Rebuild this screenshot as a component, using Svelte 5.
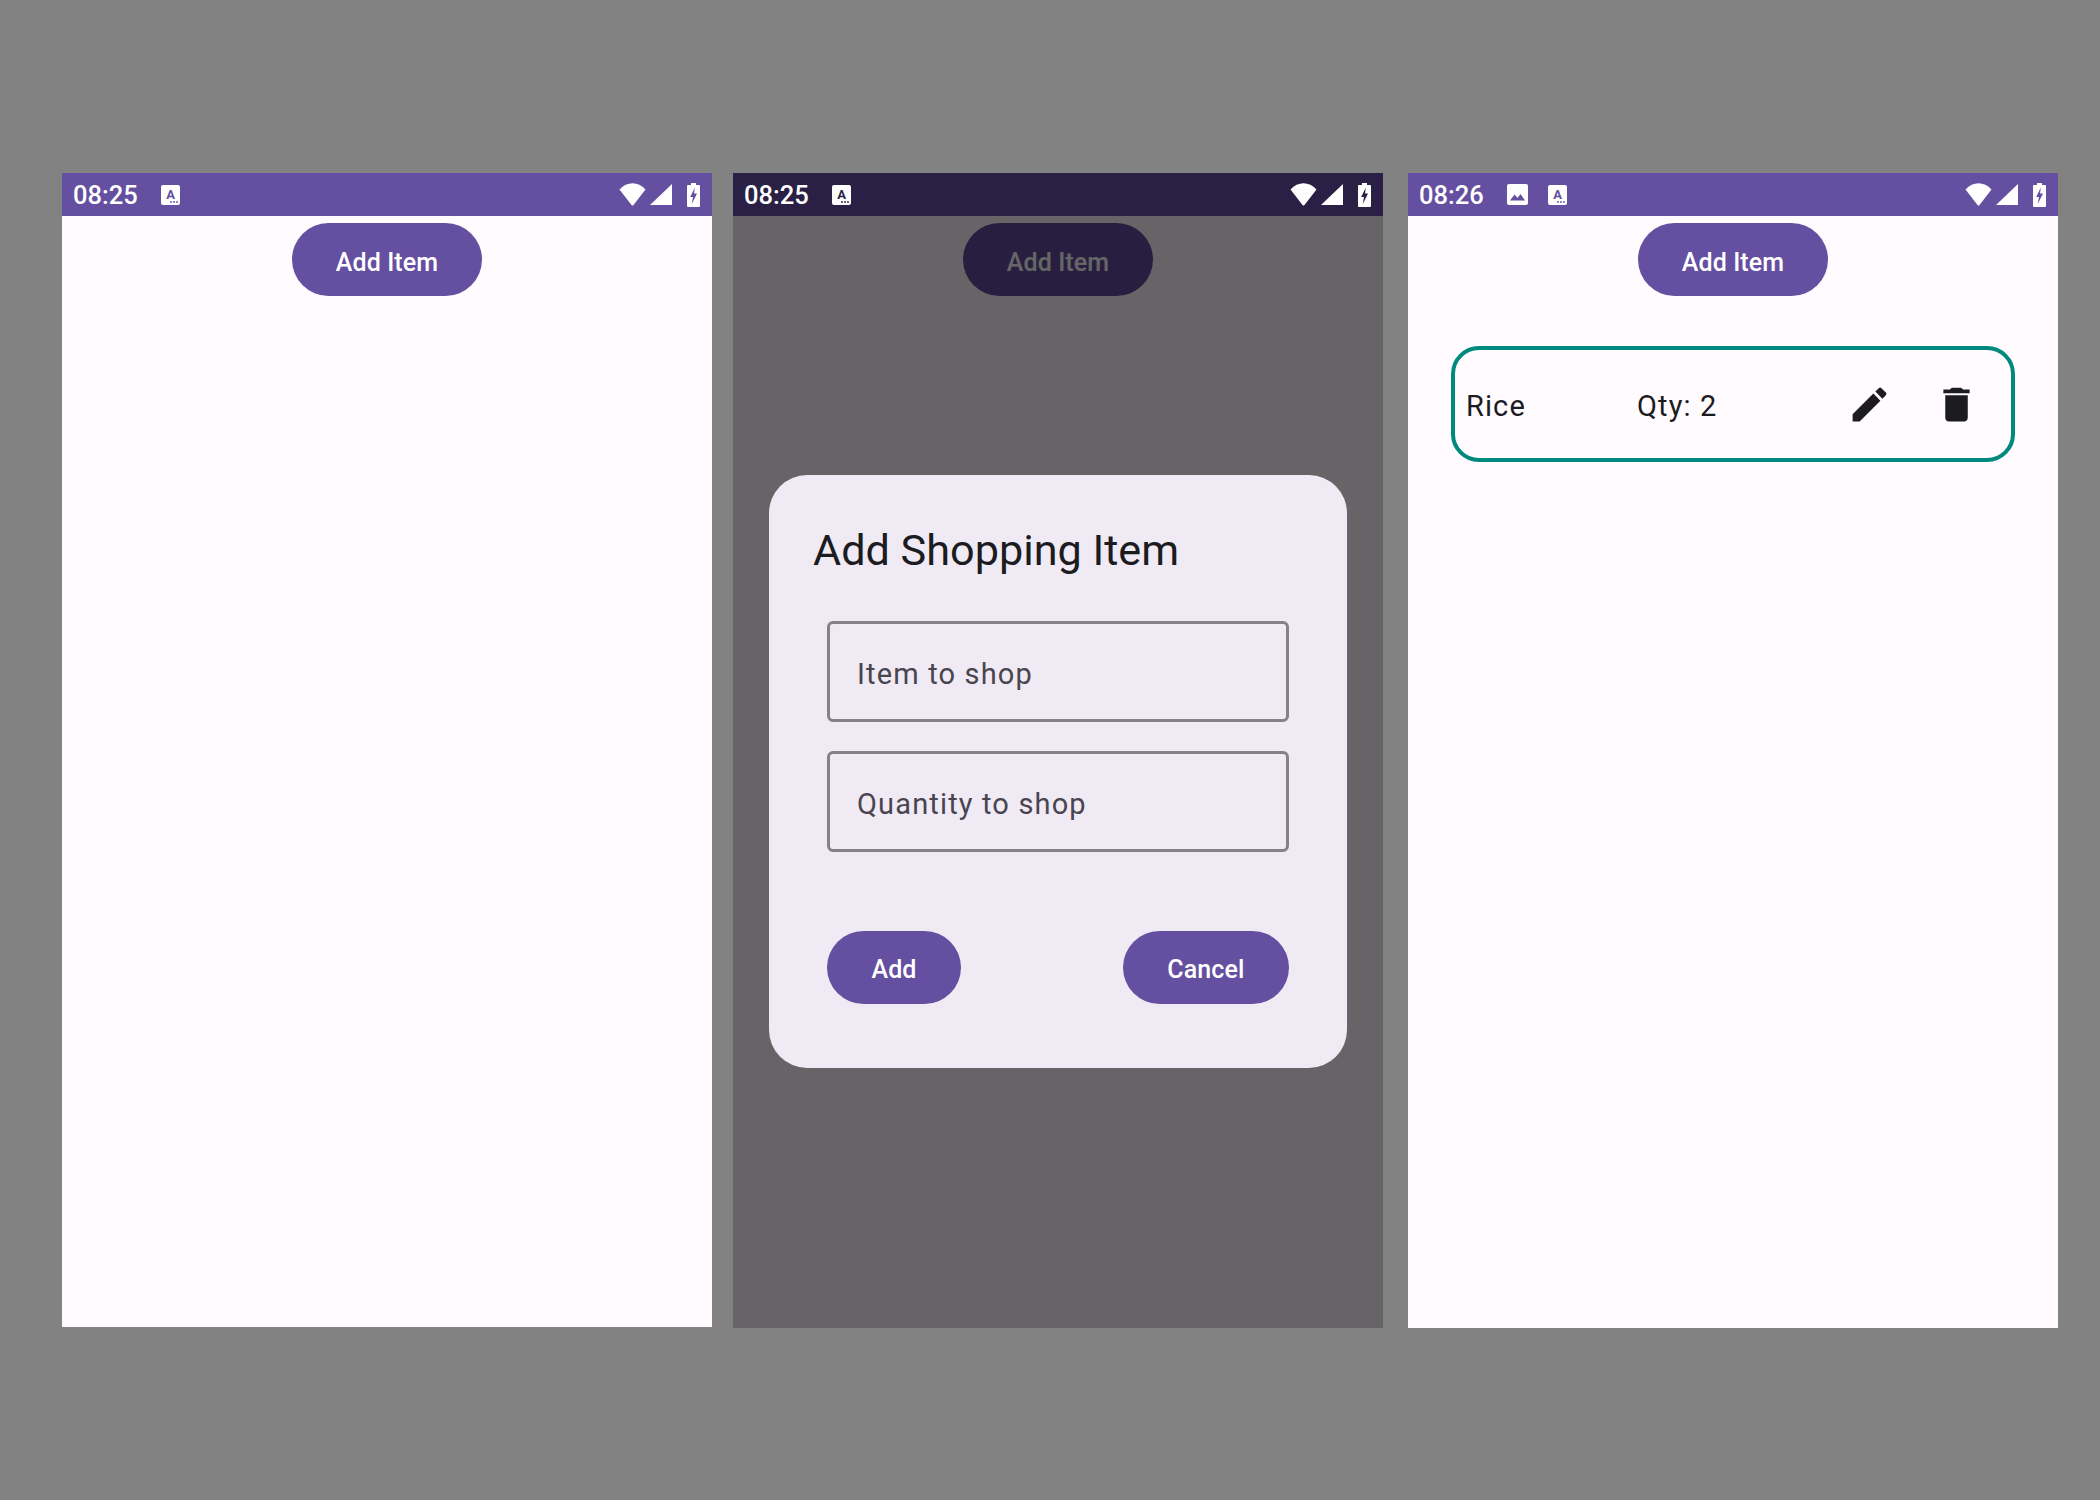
<script>
	const phones = [
		{ time: '08:25', dim: false, mode: 'empty' },
		{ time: '08:25', dim: true, mode: 'dialog' },
		{ time: '08:26', dim: false, mode: 'list', picture: true }
	];
</script>

{#snippet letterIcon()}
	<svg class="note" viewBox="0 0 19 20" width="19" height="20">
		<rect width="19" height="20" rx="2" fill="#fff" />
		<text x="9.5" y="13.5" text-anchor="middle" class="glyph">A</text>
		<circle cx="10" cy="17" r="0.9" class="cut" />
		<circle cx="13" cy="17" r="0.9" class="cut" />
		<circle cx="16" cy="17" r="0.9" class="cut" />
	</svg>
{/snippet}

<main class="page">
	{#each phones as phone}
		<section class="phone">
			<header class="status" class:dim={phone.dim}>
				<span class="time">{phone.time}</span>
				{#if phone.picture}
					<svg class="note" viewBox="0 0 21 21" width="21" height="21">
						<rect width="21" height="21" rx="2" fill="#fff" />
						<path class="cut" d="M3 16.5 7.5 10.5 10.5 14 13.5 10 18 16.5Z" />
					</svg>
				{/if}
				{@render letterIcon()}
				<div class="sys">
					<svg viewBox="0 0 27 23" width="27" height="23">
						<path fill="#fff" d="M0.5 6.5C8 -1.8 19 -1.8 26.5 6.5L14.5 22a1.3 1.3 0 0 1-2 0Z" />
					</svg>
					<svg viewBox="0 0 22 21" width="22" height="21">
						<path fill="#fff" d="M22 0V21H0Z" />
					</svg>
					<svg class="batt" viewBox="0 0 13 24" width="13" height="24">
						<path fill="#fff" d="M4 0h5v2h3a1 1 0 0 1 1 1v20a1 1 0 0 1-1 1H1a1 1 0 0 1-1-1V3a1 1 0 0 1 1-1h3Z" />
						<path class="cut" d="M7.8 4.5 3.2 14h2.8L4.8 21 10 10.5H7Z" />
					</svg>
				</div>
			</header>

			<div class="content">
				<div class="top">
					<button class="btn add-item">Add Item</button>
				</div>

				{#if phone.mode === 'list'}
					<div class="row">
						<span class="name">Rice</span>
						<span class="qty">Qty: 2</span>
						<div class="actions">
							<span class="icon-btn">
								<svg viewBox="0 0 24 24" width="45" height="45">
									<path d="M3 17.25V21h3.75L17.81 9.94l-3.75-3.75L3 17.25zM20.71 7.04c.39-.39.39-1.02 0-1.41l-2.34-2.34c-.39-.39-1.02-.39-1.41 0l-1.83 1.83 3.75 3.75 1.83-1.83z" />
								</svg>
							</span>
							<span class="icon-btn">
								<svg viewBox="0 0 24 24" width="45" height="45">
									<path d="M6 19c0 1.1.9 2 2 2h8c1.1 0 2-.9 2-2V7H6v12zM19 4h-3.5l-1-1h-5l-1 1H5v2h14V4z" />
								</svg>
							</span>
						</div>
					</div>
				{/if}

				{#if phone.mode === 'dialog'}
					<div class="scrim">
						<div class="dialog">
							<h2>Add Shopping Item</h2>
							<div class="field">Item to shop</div>
							<div class="field">Quantity to shop</div>
							<div class="buttons">
								<button class="btn small">Add</button>
								<button class="btn small">Cancel</button>
							</div>
						</div>
					</div>
				{/if}
			</div>
		</section>
	{/each}
</main>

<style>
	:global(body) {
		margin: 0;
		background: #828282;
	}
	.page {
		display: flex;
		gap: 21px;
		box-sizing: border-box;
		width: 2100px;
		height: 1500px;
		padding: 173px 0 0 62px;
		background: #828282;
		font-family: Roboto, sans-serif;
	}
	.phone {
		display: flex;
		flex-direction: column;
		width: 650px;
		height: 1154px;
		background: #fffbfe;
	}
	.phone:nth-child(2) {
		height: 1155px;
	}
	.phone:last-child {
		margin-left: 4px;
		height: 1155px;
	}
	.status {
		display: flex;
		align-items: center;
		flex: none;
		height: 43px;
		padding: 0 12px 0 11px;
		background: #654fa0;
		color: #fff;
		--bar: #654fa0;
	}
	.status.dim {
		background: #2a1f44;
		--bar: #2a1f44;
	}
	.time {
		width: 64px;
		margin-right: 24px;
		padding-top: 2px;
		font-size: 25.5px;
		font-weight: 500;
		line-height: 41px;
	}
	.note {
		margin-right: 20px;
	}
	.cut {
		fill: var(--bar);
	}
	.glyph {
		fill: var(--bar);
		font-family: Roboto, sans-serif;
		font-size: 13px;
		font-weight: 700;
	}
	.sys {
		display: flex;
		align-items: center;
		gap: 4px;
		margin-left: auto;
	}
	.batt {
		margin-left: 11px;
	}
	.content {
		position: relative;
		flex: 1;
	}
	.top {
		display: flex;
		justify-content: center;
		padding-top: 7px;
	}
	.btn {
		border: 0;
		border-radius: 37px;
		background: #654fa0;
		color: #fff;
		font-family: Roboto, sans-serif;
		font-size: 25px;
		font-weight: 500;
		letter-spacing: 0.1px;
		padding: 5px 0 0;
	}
	.add-item {
		width: 190px;
		height: 73px;
	}
	.row {
		display: flex;
		align-items: center;
		box-sizing: border-box;
		width: 564px;
		height: 116px;
		margin: 50px 0 0 43px;
		padding: 0 22px 0 11px;
		border: 4px solid #00897f;
		border-radius: 28px;
		color: #1c1b1f;
		font-size: 29px;
		letter-spacing: 1.1px;
	}
	.name {
		width: 171px;
		padding-top: 4px;
	}
	.qty {
		flex: 1;
		padding-top: 4px;
	}
	.actions {
		display: flex;
		gap: 22px;
	}
	.icon-btn {
		display: flex;
		align-items: center;
		justify-content: center;
		width: 65px;
		height: 65px;
	}
	.icon-btn path {
		fill: #1c1b1f;
	}
	.scrim {
		position: absolute;
		inset: 0;
		display: flex;
		align-items: center;
		justify-content: center;
		box-sizing: border-box;
		padding-bottom: 2px;
		background: rgba(0, 0, 0, 0.6);
	}
	.dialog {
		box-sizing: border-box;
		width: 578px;
		height: 593px;
		padding: 0 58px;
		border-radius: 38px;
		background: #efeaf4;
	}
	h2 {
		margin: 50px 0 0 -14px;
		color: #1c1b1f;
		font-size: 43.2px;
		font-weight: 400;
		line-height: 52px;
	}
	.field {
		display: flex;
		align-items: center;
		box-sizing: border-box;
		height: 101px;
		margin-bottom: 29px;
		padding: 6px 0 0 27px;
		border: 3px solid #85808a;
		border-radius: 6px;
		color: #49454f;
		font-size: 29px;
		letter-spacing: 1.15px;
	}
	h2 + .field {
		margin-top: 44px;
	}
	.buttons {
		display: flex;
		justify-content: space-between;
		margin-top: 79px;
	}
	.small {
		height: 73px;
		padding: 5px 44.5px 0;
	}
</style>
